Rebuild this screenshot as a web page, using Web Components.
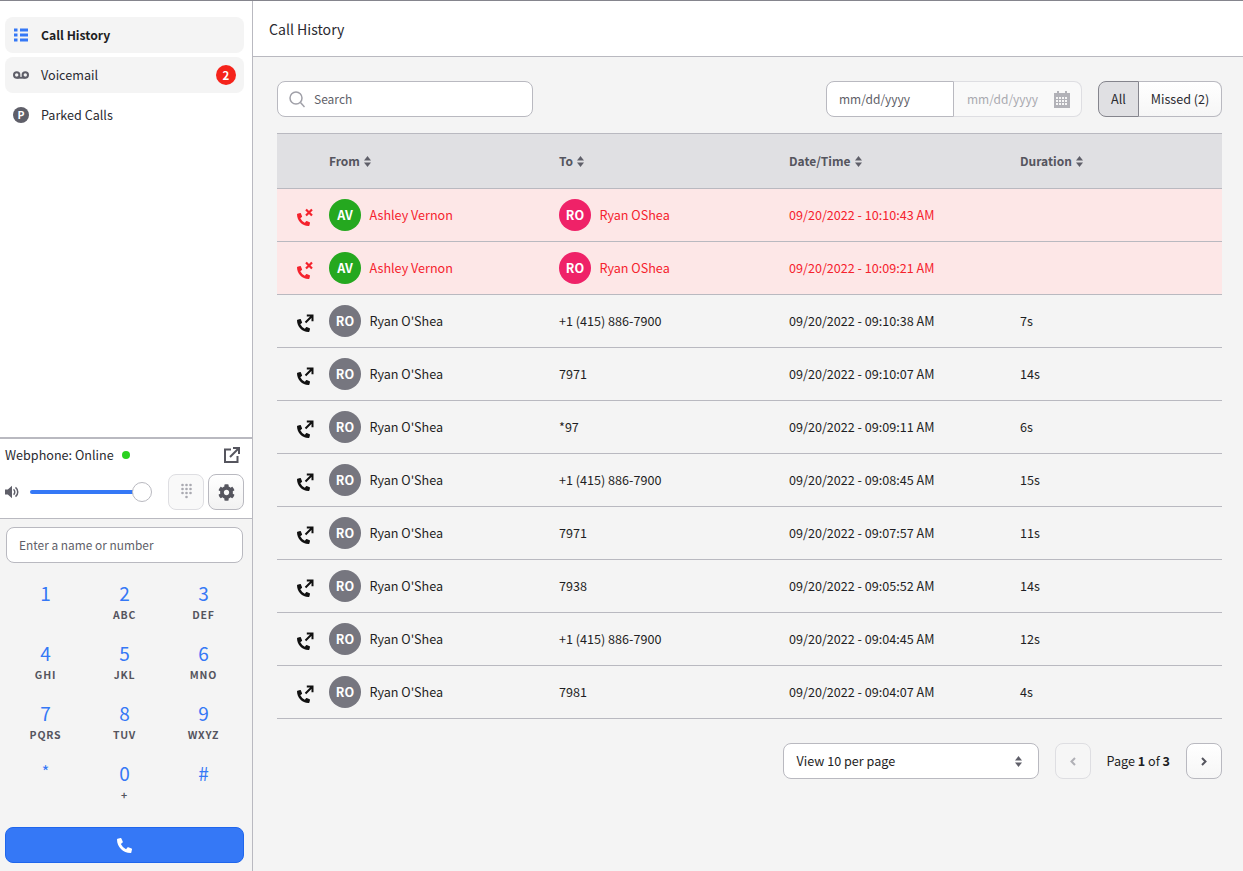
<!DOCTYPE html>
<html><head><meta charset="utf-8"><title>Call History</title>
<style>
html,body{margin:0;padding:0;height:100%}
body{font:12.6px/20px "Noto Sans CJK JP","Noto Sans",sans-serif;color:#1e1e23;background:#f4f4f4;overflow:hidden}
</style></head>
<body>
<app-shell>
  <side-bar slot="side"></side-bar>
  <history-view slot="main"></history-view>
</app-shell>
<script>
const PHONE='M497.39 361.8l-112-48a24 24 0 0 0-28 6.9l-49.6 60.6A370.66 370.66 0 0 1 130.6 204.11l60.6-49.6a23.94 23.94 0 0 0 6.9-28l-48-112A24.16 24.16 0 0 0 122.6.61l-104 24A24 24 0 0 0 0 48c0 256.5 207.9 464 464 464a24 24 0 0 0 23.4-18.6l24-104a24.29 24.29 0 0 0-14.01-27.6z';
const COG='M487.4 315.7l-42.6-24.6c4.3-23.2 4.3-47 0-70.2l42.6-24.6c4.9-2.8 7.1-8.6 5.5-14-11.1-35.6-30-67.8-54.7-94.6-3.8-4.1-10-5.1-14.8-2.3L380.8 110c-17.9-15.4-38.5-27.3-60.8-35.1V25.8c0-5.6-3.9-10.5-9.4-11.7-36.7-8.2-74.3-7.8-109.2 0-5.5 1.2-9.4 6.1-9.4 11.7V75c-22.2 7.9-42.8 19.8-60.8 35.1L88.7 85.5c-4.9-2.8-11-1.9-14.8 2.3-24.7 26.7-43.6 58.9-54.7 94.6-1.7 5.4.6 11.2 5.5 14L67.3 221c-4.3 23.2-4.3 47 0 70.2l-42.6 24.6c-4.9 2.8-7.1 8.6-5.5 14 11.1 35.6 30 67.8 54.7 94.6 3.8 4.1 10 5.1 14.8 2.3l42.6-24.6c17.9 15.4 38.5 27.3 60.8 35.1v49.2c0 5.6 3.9 10.5 9.4 11.7 36.7 8.2 74.3 7.8 109.2 0 5.5-1.2 9.4-6.1 9.4-11.7v-49.2c22.2-7.9 42.8-19.8 60.8-35.1l42.6 24.6c4.9 2.8 11 1.9 14.8-2.3 24.7-26.7 43.6-58.9 54.7-94.6 1.5-5.5-.7-11.3-5.6-14.1zM256 336c-44.1 0-80-35.9-80-80s35.9-80 80-80 80 35.9 80 80-35.9 80-80 80z';
const ICONS={
 list:`<svg width="14" height="14" viewBox="0 0 14 14" fill="#3578f6" style="margin-left:1px"><rect x="0" y="0.500" width="3.500" height="3"/><rect x="6" y="0.500" width="8" height="3"/><rect x="0" y="5.500" width="3.500" height="3"/><rect x="6" y="5.500" width="8" height="3"/><rect x="0" y="10.500" width="3.500" height="3"/><rect x="6" y="10.500" width="8" height="3"/></svg>`,
 vm:`<svg width="16" height="8" viewBox="0 0 16 8" fill="none" stroke="#5f5f69" stroke-width="2"><circle cx="3.700" cy="4" r="2.700"/><circle cx="12.300" cy="4" r="2.700"/><path d="M3.700 6.700h8.600"/></svg>`,
 speaker:`<svg width="14" height="14" viewBox="0 0 14 14" fill="#5f5f69"><path d="M0 4.500h2.800L7 .8v12.400L2.800 9.500H0z"/><path d="M8.500 4.300c1.700 1.200 1.700 4.200 0 5.400" fill="none" stroke="#5f5f69" stroke-width="1.500"/><path d="M10.500 2.300c3 2.400 3 7 0 9.400" fill="none" stroke="#5f5f69" stroke-width="1.500"/></svg>`,
 pop:`<svg width="16" height="16" viewBox="0 0 16 16" fill="none" stroke="#55555e" stroke-width="2"><path d="M7 2.500H1v12.500h12.500V9"/><path d="M6 10l9-9"/><path d="M9 1h6v6"/></svg>`,
 pad:`<svg width="13" height="18" viewBox="0 0 13 18" fill="#a9a9b0"><circle cx="2.500" cy="2" r="1.300"/><circle cx="6.500" cy="2" r="1.300"/><circle cx="10.500" cy="2" r="1.300"/><circle cx="2.500" cy="6" r="1.300"/><circle cx="6.500" cy="6" r="1.300"/><circle cx="10.500" cy="6" r="1.300"/><circle cx="2.500" cy="10" r="1.300"/><circle cx="6.500" cy="10" r="1.300"/><circle cx="10.500" cy="10" r="1.300"/><circle cx="6.500" cy="14" r="1.300"/></svg>`,
 cog:`<svg width="17" height="17" viewBox="0 0 512 512" fill="#55555e"><path d="${COG}"/></svg>`,
 phone:`<svg width="15" height="15" viewBox="0 0 512 512" fill="#fff"><path d="${PHONE}"/></svg>`,
 search:`<svg width="16" height="17" viewBox="0 0 16 17" fill="none" stroke="#a0a0a8" stroke-width="1.500"><circle cx="7" cy="7" r="6"/><path d="M11.500 11.500l4 4.500"/></svg>`,
 cal:`<svg width="16" height="17" viewBox="0 0 16 17" fill="#b2b2b8"><path d="M0 2h3V0h2v2h6V0h2v2h3v15H0z"/><g fill="#f6f6f6"><rect x="2" y="6" width="2" height="2"/><rect x="5" y="6" width="2" height="2"/><rect x="8" y="6" width="2" height="2"/><rect x="11" y="6" width="2" height="2"/><rect x="2" y="9" width="2" height="2"/><rect x="5" y="9" width="2" height="2"/><rect x="8" y="9" width="2" height="2"/><rect x="11" y="9" width="2" height="2"/><rect x="2" y="12" width="2" height="2"/><rect x="5" y="12" width="2" height="2"/><rect x="8" y="12" width="2" height="2"/><rect x="11" y="12" width="2" height="2"/></g></svg>`,
 sort:`<svg width="7" height="11" viewBox="0 0 7 11" fill="#5f5f69"><path d="M3.500 0L7 4.500H0z"/><path d="M3.500 11L0 6.500h7z"/></svg>`,
 left:`<svg width="6" height="9" viewBox="0 0 6 9" fill="none" stroke="#b0b0b6" stroke-width="2"><path d="M5 1L1.500 4.500 5 8"/></svg>`,
 right:`<svg width="6" height="9" viewBox="0 0 6 9" fill="none" stroke="#55555e" stroke-width="2"><path d="M1 1l3.500 3.500L1 8"/></svg>`,
 missed:`<svg width="18" height="18" viewBox="0 0 18 18"><g fill="#f5222d"><path d="${PHONE}" transform="translate(1 5) scale(.0254)"/></g><path d="M10 1.500l6 6M16 1.500l-6 6" stroke="#f5222d" stroke-width="2.200" fill="none"/></svg>`,
 out:`<svg width="18" height="18" viewBox="0 0 18 18"><path d="${PHONE}" transform="translate(1 5) scale(.0254)" fill="#111"/><path d="M10.800 1.500h5.700v5.700M16.500 1.500L9.500 8.500" stroke="#111" stroke-width="2" fill="none"/></svg>`
};
function def(name,css,html){
  customElements.define(name,class extends HTMLElement{
    constructor(){super();this.attachShadow({mode:'open'})}
    connectedCallback(){
      const get=a=>this.getAttribute(a)||'';
      this.shadowRoot.innerHTML=`<style>${css}</style>`+(typeof html==='function'?html(get,this):html);
    }
  });
}
def('app-shell',`:host{display:grid;grid-template-columns:253px 1fr;height:870px;border-top:1px solid #85858d;background:#f4f4f4}
.s{display:block;border-right:1px solid #b9b9c0;min-height:0}.m{display:block;min-width:0}`,
`<div class="s"><slot name="side"></slot></div><div class="m"><slot name="main"></slot></div>`);

def('side-bar',`:host{display:flex;flex-direction:column;height:870px}
.nav{flex:none;background:#fff;border-bottom:2px solid #b9b9c0;padding:16px 8px 0 5px;box-sizing:border-box;height:438px;display:flex;flex-direction:column;gap:4px}
`,`<div class="nav">
<nav-item label="Call History" icon="list" active strong></nav-item>
<nav-item label="Voicemail" icon="vm" active badge="2"></nav-item>
<nav-item label="Parked Calls" icon="p"></nav-item>
</div>
<web-phone></web-phone><dial-panel></dial-panel>`);

def('nav-item',`:host{display:flex;align-items:center;height:36px;border-radius:8px;box-sizing:border-box;padding:0 8px;font-size:12.6px;color:#2a2a30}
:host([active]){background:#f4f4f4}
:host([strong]){font-weight:600;color:#1e1e23;font-size:12.2px}
.i{width:28px;flex:none;display:flex;align-items:center}
.l{flex:1}
.b{width:20px;height:20px;border-radius:50%;background:#f5231b;color:#fff;font-size:11.500px;font-weight:700;display:flex;align-items:center;justify-content:center;line-height:20px}
.p{width:16px;height:16px;border-radius:50%;background:#5f5f69;color:#fff;font-size:10.500px;font-weight:700;display:flex;align-items:center;justify-content:center;line-height:16px}
`,(g)=>`<span class="i">${g('icon')==='p'?'<span class="p">P</span>':ICONS[g('icon')]}</span><span class="l">${g('label')}</span>${g('badge')?`<span class="b">${g('badge')}</span>`:''}`);

def('web-phone',`:host{display:block;background:#fff;height:80px;box-sizing:border-box;border-bottom:1px solid #b9b9c0;padding:6px 8px 0 5px}
.t{display:flex;align-items:center;height:20px;font-size:12.6px;color:#2a2a30}
.d{width:8px;height:8px;border-radius:50%;background:#2ad11f;margin-left:8px}
.sp{flex:1}
.pop{display:flex;margin-right:4px}
.c{display:flex;align-items:center;height:36px;margin-top:9px}
.tr{width:110px;margin-left:11px;height:4px;background:#3578f6;border-radius:2px;position:relative;flex:none}
.th{position:absolute;right:-12px;top:-8px;width:20px;height:20px;box-sizing:border-box;border:1px solid #b9b9c0;border-radius:50%;background:#fff}
.btn{width:36px;height:36px;box-sizing:border-box;border:1px solid #b9b9c0;border-radius:8px;background:linear-gradient(#fff,#f2f2f2);display:flex;align-items:center;justify-content:center}
.btn.dis{border-color:#dedee2;background:#f9f9f9;margin-left:auto}
.btn+.btn{margin-left:4px}
`,`<div class="t"><span>Webphone: Online</span><span class="d"></span><span class="sp"></span><span class="pop">${ICONS.pop}</span></div>
<div class="c">${ICONS.speaker}<div class="tr"><div class="th"></div></div><div class="btn dis">${ICONS.pad}</div><div class="btn">${ICONS.cog}</div></div>`);

def('dial-panel',`:host{display:block;padding:8px 8px 0 5px}
.in{margin-left:1px;width:237px;height:36px;box-sizing:border-box;border:1px solid #b9b9c0;border-radius:8px;background:#fff;padding:0 12px;display:flex;align-items:center;color:#5f5f69;font-size:11.900px}
.g{display:grid;grid-template-columns:repeat(3,1fr);margin:18px 1px 0;grid-auto-rows:60px}
.call{height:36px;border-radius:8px;background:#3578f6;border:1px solid #1f66ec;box-sizing:border-box;display:flex;align-items:center;justify-content:center;margin-top:6px}
`,`<div class="in">Enter a name or number</div>
<div class="g">
<dial-key d="1"></dial-key><dial-key d="2" s="ABC"></dial-key><dial-key d="3" s="DEF"></dial-key>
<dial-key d="4" s="GHI"></dial-key><dial-key d="5" s="JKL"></dial-key><dial-key d="6" s="MNO"></dial-key>
<dial-key d="7" s="PQRS"></dial-key><dial-key d="8" s="TUV"></dial-key><dial-key d="9" s="WXYZ"></dial-key>
<dial-key d="*" small></dial-key><dial-key d="0" s="+"></dial-key><dial-key d="#"></dial-key>
</div>
<div class="call">${ICONS.phone}</div>`);

def('dial-key',`:host{display:flex;flex-direction:column;align-items:center}
.d{font-size:19px;line-height:24px;color:#3578f6}
:host([small]) .d{font-size:16px;line-height:18px;padding-top:1px}
.s{font-size:10.500px;line-height:14px;font-weight:600;color:#55555e;letter-spacing:.8px;margin-top:3px}
`,g=>`<div class="d">${g('d')}</div>${g('s')?`<div class="s">${g('s')}</div>`:''}`);

def('history-view',`:host{display:block}
header{height:55px;background:#fff;border-bottom:1px solid #b9b9c0;display:flex;align-items:center;padding-left:16px;font-size:14.100px;color:#2a2a30}
.b{padding:24px 21px 0 24px}
`,`<header>Call History</header><div class="b"><filter-bar></filter-bar><call-table></call-table><pager-bar></pager-bar></div>`);

def('filter-bar',`:host{display:flex;align-items:center;height:36px;font-size:12.6px}
.box{box-sizing:border-box;height:36px;border:1px solid #b9b9c0;border-radius:8px;background:#fff;display:flex;align-items:center}
.s{width:256px;padding-left:11px;color:#5f5f69;font-size:12px}.s span{margin-left:9px}
.sp{flex:1}
.dr{width:256px;display:flex;height:36px;box-sizing:border-box;font-size:12px}
.d1{width:128px;box-sizing:border-box;border:1px solid #b9b9c0;border-right:1px solid #b9b9c0;border-radius:8px 0 0 8px;background:#fff;display:flex;align-items:center;padding-left:12px;color:#5f5f69}
.d2{flex:1;box-sizing:border-box;border:1px solid #dedee2;border-left:0;border-radius:0 8px 8px 0;background:#f9f9f9;display:flex;align-items:center;justify-content:space-between;padding:0 11px 0 13px;color:#a9a9b0}
.seg{display:flex;margin-left:16px;height:36px}
.a{width:41px;box-sizing:border-box;border:1px solid #85858d;border-radius:8px 0 0 8px;background:#e0e0e3;display:flex;align-items:center;justify-content:center;color:#2a2a30}
.m{width:83px;box-sizing:border-box;border:1px solid #b9b9c0;border-left:0;border-radius:0 8px 8px 0;background:linear-gradient(#fff,#f6f6f6);display:flex;align-items:center;justify-content:center;color:#2a2a30}
`,`<div class="box s">${ICONS.search}<span>Search</span></div><div class="sp"></div>
<div class="dr"><div class="d1">mm/dd/yyyy</div><div class="d2"><span>mm/dd/yyyy</span>${ICONS.cal}</div></div>
<div class="seg"><div class="a">All</div><div class="m">Missed (2)</div></div>`);

const ROWS=[
['m','AV','#25a81f','Ashley Vernon','#ef2268','RO','Ryan OShea','09/20/2022 - 10:10:43 AM',''],
['m','AV','#25a81f','Ashley Vernon','#ef2268','RO','Ryan OShea','09/20/2022 - 10:09:21 AM',''],
['o','RO','','Ryan O\'Shea','','','+1 (415) 886-7900','09/20/2022 - 09:10:38 AM','7s'],
['o','RO','','Ryan O\'Shea','','','7971','09/20/2022 - 09:10:07 AM','14s'],
['o','RO','','Ryan O\'Shea','','','*97','09/20/2022 - 09:09:11 AM','6s'],
['o','RO','','Ryan O\'Shea','','','+1 (415) 886-7900','09/20/2022 - 09:08:45 AM','15s'],
['o','RO','','Ryan O\'Shea','','','7971','09/20/2022 - 09:07:57 AM','11s'],
['o','RO','','Ryan O\'Shea','','','7938','09/20/2022 - 09:05:52 AM','14s'],
['o','RO','','Ryan O\'Shea','','','+1 (415) 886-7900','09/20/2022 - 09:04:45 AM','12s'],
['o','RO','','Ryan O\'Shea','','','7981','09/20/2022 - 09:04:07 AM','4s']];
const COLS='52px 230px 230px 231px 1fr';
def('call-table',`:host{display:block;margin-top:16px;font-size:12.6px}
.h{display:grid;grid-template-columns:${COLS};height:54px;align-items:center;background:#e0e0e3;border-top:1px solid #b9b9c0;font-weight:600;color:#55555e;font-size:12px}
.h span{display:inline-flex;align-items:center;gap:4px}
.row{display:grid;grid-template-columns:${COLS};height:52px;align-items:center;border-bottom:1px solid #b9b9c0;color:#1e1e23}
.row.m{background:#fde7e7;color:#f5222d}
.ic{display:flex;justify-content:center;padding-top:3px;padding-left:4px}
.who{display:flex;align-items:center;gap:8px}
.who span+span{padding-left:.5px}
.av{width:32px;height:32px;border-radius:50%;background:#76767f;color:#fff;font-weight:700;font-size:12.6px;display:flex;align-items:center;justify-content:center;flex:none}
.ro{border-bottom:1px solid #b9b9c0;height:0}
`,()=>`<div class="h"><i></i><span>From ${ICONS.sort}</span><span>To ${ICONS.sort}</span><span>Date/Time ${ICONS.sort}</span><span>Duration ${ICONS.sort}</span></div><div class="ro"></div>`+
ROWS.map(r=>{const av=(t,c)=>`<span class="av" style="${c?'background:'+c:''}">${t}</span>`;
return `<div class="row ${r[0]}"><div class="ic">${r[0]==='m'?ICONS.missed:ICONS.out}</div><div class="who">${av(r[1],r[2])}<span>${r[3]}</span></div><div class="who">${r[5]?av(r[5],r[4]):''}<span>${r[6]}</span></div><div>${r[7]}</div><div>${r[8]}</div></div>`}).join(''));

def('pager-bar',`:host{display:flex;justify-content:flex-end;align-items:center;margin-top:24px;height:36px;font-size:12.6px;color:#1e1e23}
.sel{width:256px;height:36px;box-sizing:border-box;border:1px solid #b9b9c0;border-radius:8px;background:#fff;display:flex;align-items:center;justify-content:space-between;padding:0 16px 0 13px}
.btn{width:36px;height:36px;box-sizing:border-box;border:1px solid #b9b9c0;border-radius:8px;display:flex;align-items:center;justify-content:center;background:linear-gradient(#fff,#f6f6f6)}
.btn.dis{border-color:#dedee2;background:#f6f6f6;margin-left:16px}
.p{margin:0 16px}b{font-weight:700}
`,`<div class="sel"><span>View 10 per page</span>${ICONS.sort}</div><div class="btn dis">${ICONS.left}</div><div class="p">Page <b>1</b> of <b>3</b></div><div class="btn">${ICONS.right}</div>`);
</script>
</body></html>
